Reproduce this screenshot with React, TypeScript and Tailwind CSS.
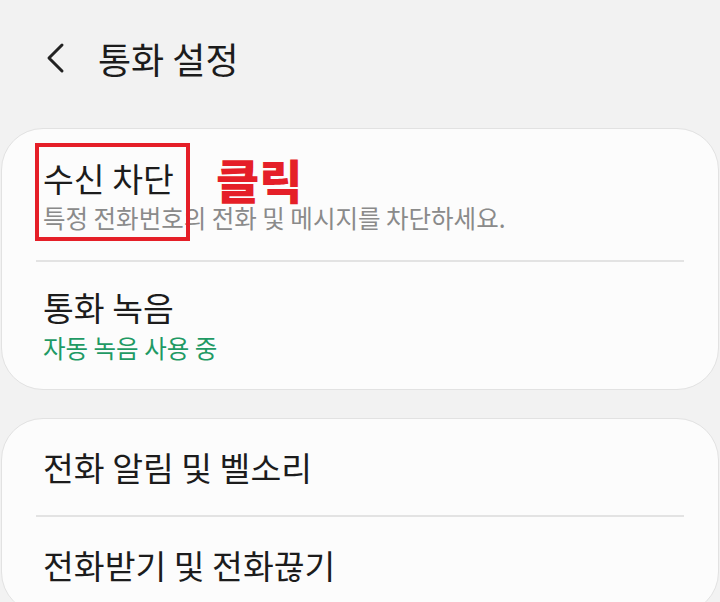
import React from "react";

const font = "font-['Noto_Sans_CJK_KR','Noto_Sans',sans-serif]";

function Item({ title, sub, subClass, gap = 3 }: { title: string; sub?: string; subClass?: string; gap?: number }) {
  return (
    <div className="flex flex-col pl-[41px]">
      <div className="text-[33.5px] leading-[42px] text-[#1c1c1c]">{title}</div>
      {sub && (
        <div className={`text-[24.5px] leading-[32px] ${gap === 3 ? "mt-[3px]" : "mt-[4px]"} ${subClass}`}>{sub}</div>
      )}
    </div>
  );
}

export default function App() {
  return (
    <div className={`w-[720px] h-[602px] overflow-hidden bg-[#f2f2f2] ${font}`}>
      <div className="h-[116px] mb-[12px] flex items-center">
        <svg width="24" height="32" viewBox="0 0 24 32" className="ml-[43px]">
          <polyline points="19,3 6,16 19,29" fill="none" stroke="#222" strokeWidth="3" strokeLinecap="round" strokeLinejoin="round" />
        </svg>
        <div className="ml-[31px] text-[36px] leading-[44px] text-[#1c1c1c]">통화 설정</div>
      </div>

      <div className="mx-[1px] rounded-[42px] bg-[#fcfcfc] border border-[#e2e2e2]">
        <div className="relative h-[131px] pt-[28px]">
          <Item title="수신 차단" sub="특정 전화번호의 전화 및 메시지를 차단하세요." subClass="text-[#8a8a8a]" gap={3} />
          <div className="absolute left-[33px] top-[14px] w-[155px] h-[98px] border-[4px] border-[#e51f28]" />
          <div className="absolute left-[214px] top-[28px] text-[47px] leading-[44px] font-black text-[#e51f28]">클릭</div>
        </div>
        <div className="mx-[34px] h-[2px] bg-[#e3e3e3]" />
        <div className="h-[127px] pt-[24px]">
          <Item title="통화 녹음" sub="자동 녹음 사용 중" subClass="text-[#1f9a64]" gap={4} />
        </div>
      </div>

      <div className="mt-[28px] mx-[1px] rounded-[42px] bg-[#fcfcfc] border border-[#e2e2e2]">
        <div className="h-[96px] flex items-center">
          <Item title="전화 알림 및 벨소리" />
        </div>
        <div className="mx-[34px] h-[2px] bg-[#e3e3e3]" />
        <div className="h-[96px] flex items-center">
          <Item title="전화받기 및 전화끊기" />
        </div>
      </div>
    </div>
  );
}
